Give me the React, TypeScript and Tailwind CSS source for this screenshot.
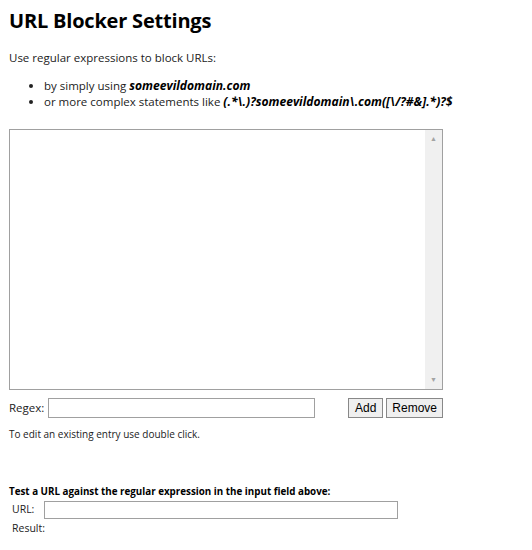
export default function App() {
  return (
    <div className="w-[532px] h-[550px] bg-white text-[#222] font-['Open_Sans',sans-serif] pl-[9px]">
      <h1 className="pt-[8px] text-[20px] font-bold text-black leading-[26px] tracking-[-0.2px]">
        URL Blocker Settings
      </h1>
      <p className="mt-[16px] text-[11.5px] leading-[16px]">Use regular expressions to block URLs:</p>
      <ul className="mt-[12px] list-disc pl-[35px] text-[11.5px] leading-[16px]">
        <li>
          by simply using <b className="italic text-black text-[12.1px]">someevildomain.com</b>
        </li>
        <li>
          or more complex statements like{" "}
          <b className="italic text-black text-[12.1px]">(.*\.)?someevildomain\.com([\/?#&amp;].*)?$</b>
        </li>
      </ul>

      <div className="mt-[19px] w-[434px] h-[261px] border border-[#a0a0a0] flex">
        <div className="flex-1" />
        <div className="w-[17px] bg-[#f0f0f0] flex flex-col justify-between items-center py-[4px]">
          <span className="text-[7px] leading-[10px] text-[#a3a3a3]">▲</span>
          <span className="text-[7px] leading-[10px] text-[#a3a3a3]">▼</span>
        </div>
      </div>

      <div className="mt-[8px] w-[434px] flex items-center text-[11.5px]">
        <span className="w-[39px]">Regex:</span>
        <input className="w-[267px] h-[20px] border border-[#a0a0a0] outline-none" />
        <div className="ml-auto flex gap-[3px] font-['Liberation_Sans',sans-serif] text-[12px] text-black">
          <button className="h-[20px] px-[6px] bg-[#efefef] border border-[#888]">Add</button>
          <button className="h-[20px] px-[5px] bg-[#efefef] border border-[#888]">Remove</button>
        </div>
      </div>

      <p className="mt-[9px] text-[10px] leading-[14px]">To edit an existing entry use double click.</p>

      <p className="mt-[44px] text-[9.8px] font-bold text-black leading-[14px]">
        Test a URL against the regular expression in the input field above:
      </p>
      <div className="mt-[2px] flex items-center text-[10.5px] pl-[3px]">
        <span className="w-[32px]">URL:</span>
        <input className="w-[354px] h-[18px] border border-[#a0a0a0] outline-none" />
      </div>
      <p className="mt-[1px] pl-[3px] text-[10.5px] leading-[16px]">Result:</p>
    </div>
  );
}
